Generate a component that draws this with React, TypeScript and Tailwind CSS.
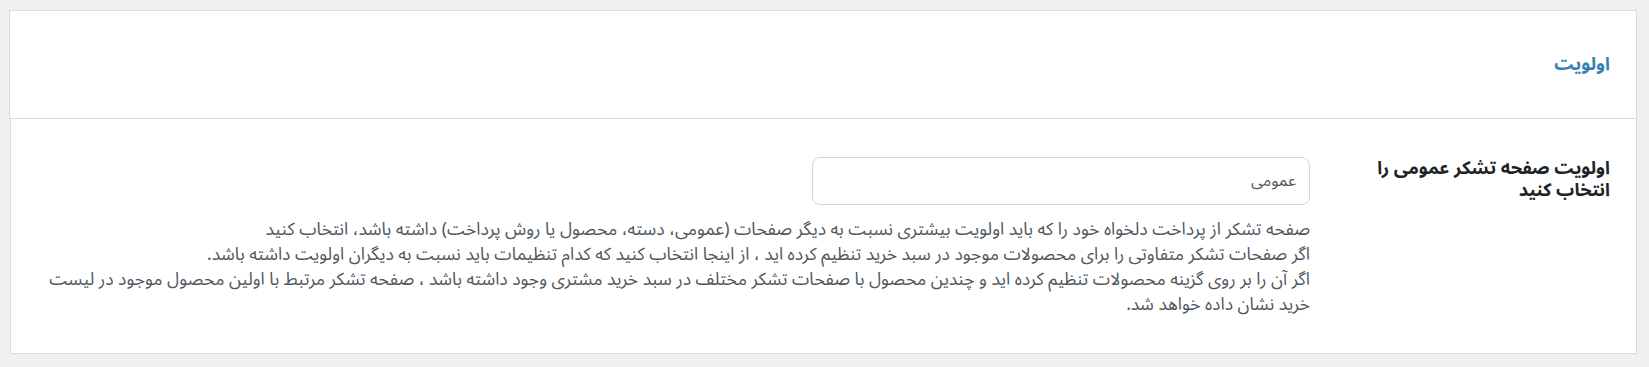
import React from "react";

export default function App() {
  return (
    <div
      dir="rtl"
      className="min-h-[367px] bg-[#f0f0f1] pt-[10px] pr-[12px] pl-[9px] font-['Noto_Sans_Arabic','DejaVu_Sans',sans-serif]"
    >
      {/* section title */}
      <div className="flex h-[109px] items-center border border-[#dcdcde] bg-white pr-[26px]">
        <h2 className="text-[18px] font-bold text-[#3582b2]">اولویت</h2>
      </div>

      {/* settings row */}
      <div className="ml-[1px] flex h-[235px] border border-t-0 border-[#dcdcde] bg-white pr-[26px] pt-[38px]">
        <div className="w-[300px] shrink-0">
          <label className="block w-[245px] text-[18px] font-bold leading-[22px] text-[#1d2327]">
            اولویت صفحه تشکر عمومی را انتخاب کنید
          </label>
        </div>
        <div className="w-[1263px]">
          <div className="flex h-[48px] w-[498px] items-center rounded-lg border border-[#d5d5d5] bg-white px-[13px] text-[16px] text-[#50575e]">
            عمومی
          </div>
          <p className="mt-[12px] text-[17.5px] leading-[25px] text-[#50575e]">
            صفحه تشکر از پرداخت دلخواه خود را که باید اولویت بیشتری نسبت به دیگر صفحات (عمومی، دسته، محصول یا روش پرداخت) داشته باشد، انتخاب کنید
            <br />
            اگر صفحات تشکر متفاوتی را برای محصولات موجود در سبد خرید تنظیم کرده اید ، از اینجا انتخاب کنید که کدام تنظیمات باید نسبت به دیگران اولویت داشته باشد.
            <br />
            اگر آن را بر روی گزینه محصولات تنظیم کرده اید و چندین محصول با صفحات تشکر مختلف در سبد خرید مشتری وجود داشته باشد ، صفحه تشکر مرتبط با اولین محصول موجود در لیست
            <br />
            خرید نشان داده خواهد شد.
          </p>
        </div>
      </div>
    </div>
  );
}
